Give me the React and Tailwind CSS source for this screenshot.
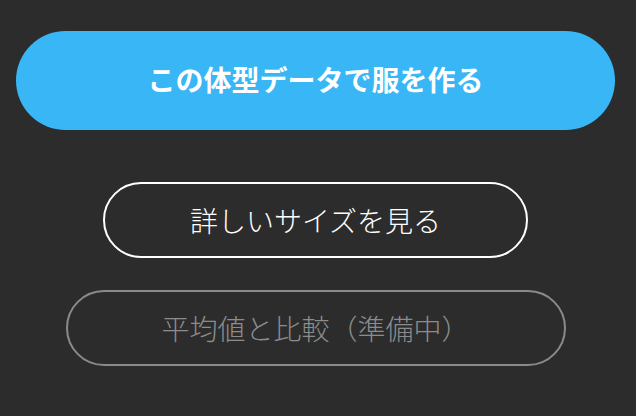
const font = { fontFamily: '"Noto Sans CJK JP", "Noto Sans", sans-serif' }

export default function App() {
  return (
    <div className="w-[636px] h-[416px] bg-[#2c2c2c] overflow-hidden" style={font}>
      <div className="w-[631px] flex flex-col items-center pt-[31px]">
        <button className="w-[599px] h-[99px] pb-[4px] rounded-full bg-[#38b6f6] text-white text-[28px] font-semibold flex items-center justify-center">
          この体型データで服を作る
        </button>
        <button className="mt-[52px] w-[425px] h-[76px] rounded-full border-2 border-white text-white text-[28px] font-light flex items-center justify-center">
          詳しいサイズを見る
        </button>
        <button disabled className="mt-[32px] w-[500px] h-[76px] rounded-full border-2 border-[#8a8a8a] text-[#8c8c8c] text-[28px] font-light flex items-center justify-center">
          平均値と比較（準備中）
        </button>
      </div>
    </div>
  )
}
